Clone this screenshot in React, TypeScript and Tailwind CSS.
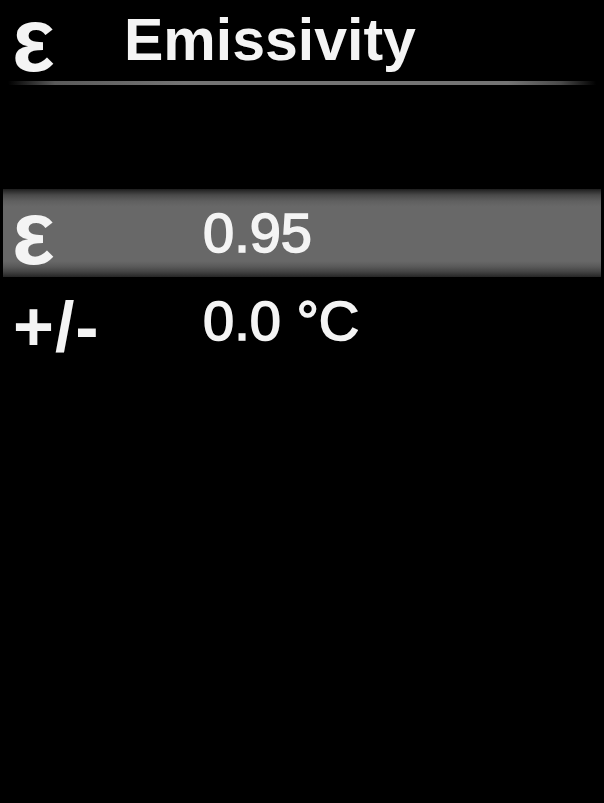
import React from 'react';

const font = { fontFamily: '"Liberation Sans", Arial, sans-serif' };

const Epsilon: React.FC<{ className?: string }> = ({ className = '' }) => (
  <span className={`text-[90px] font-bold text-[#f4f4f4] ${className}`}>ε</span>
);

interface RowProps {
  label: React.ReactNode;
  value: React.ReactNode;
  selected?: boolean;
}

const Row: React.FC<RowProps> = ({ label, value, selected = false }) => (
  <div
    className={`mx-[3px] flex h-[88px] items-center pl-[9px] ${
      selected
        ? 'bg-[linear-gradient(to_bottom,#1e1e1e_0%,#4a4a4a_7%,#606060_14%,#686868_20%,#686868_82%,#5a5a5a_88%,#444_94%,#262626_100%)]'
        : ''
    }`}
  >
    <div className="flex h-[88px] w-[191px] items-center">{label}</div>
    <div className="text-[56px] leading-none text-[#f4f4f4] [-webkit-text-stroke:1.6px_#f4f4f4]">
      {value}
    </div>
  </div>
);

export default function App() {
  return (
    <div className="h-[803px] w-[604px] overflow-hidden bg-black" style={font}>
      <div className="flex h-[80px] items-center pl-[12px]">
        <div className="flex h-[80px] w-[112px] items-center">
          <Epsilon className="leading-[80px]" />
        </div>
        <span className="text-[59px] font-bold leading-none text-[#f4f4f4]">Emissivity</span>
      </div>
      <div className="mx-[8px] mt-[1px] h-[4px] w-[588px] bg-[linear-gradient(to_right,#000_0%,#5a5a5a_8%,#747474_30%,#747474_85%,#4a4a4a_94%,#000_100%)]" />

      <div className="mt-[104px]">
        <Row selected label={<Epsilon className="leading-[88px]" />} value="0.95" />
        <Row
          label={
            <span className="ml-[1px] mt-[12px] text-[70px] font-bold leading-none tracking-[1px] text-[#f4f4f4]">
              +/-
            </span>
          }
          value={<span>0.0 °C</span>}
        />
      </div>
    </div>
  );
}
